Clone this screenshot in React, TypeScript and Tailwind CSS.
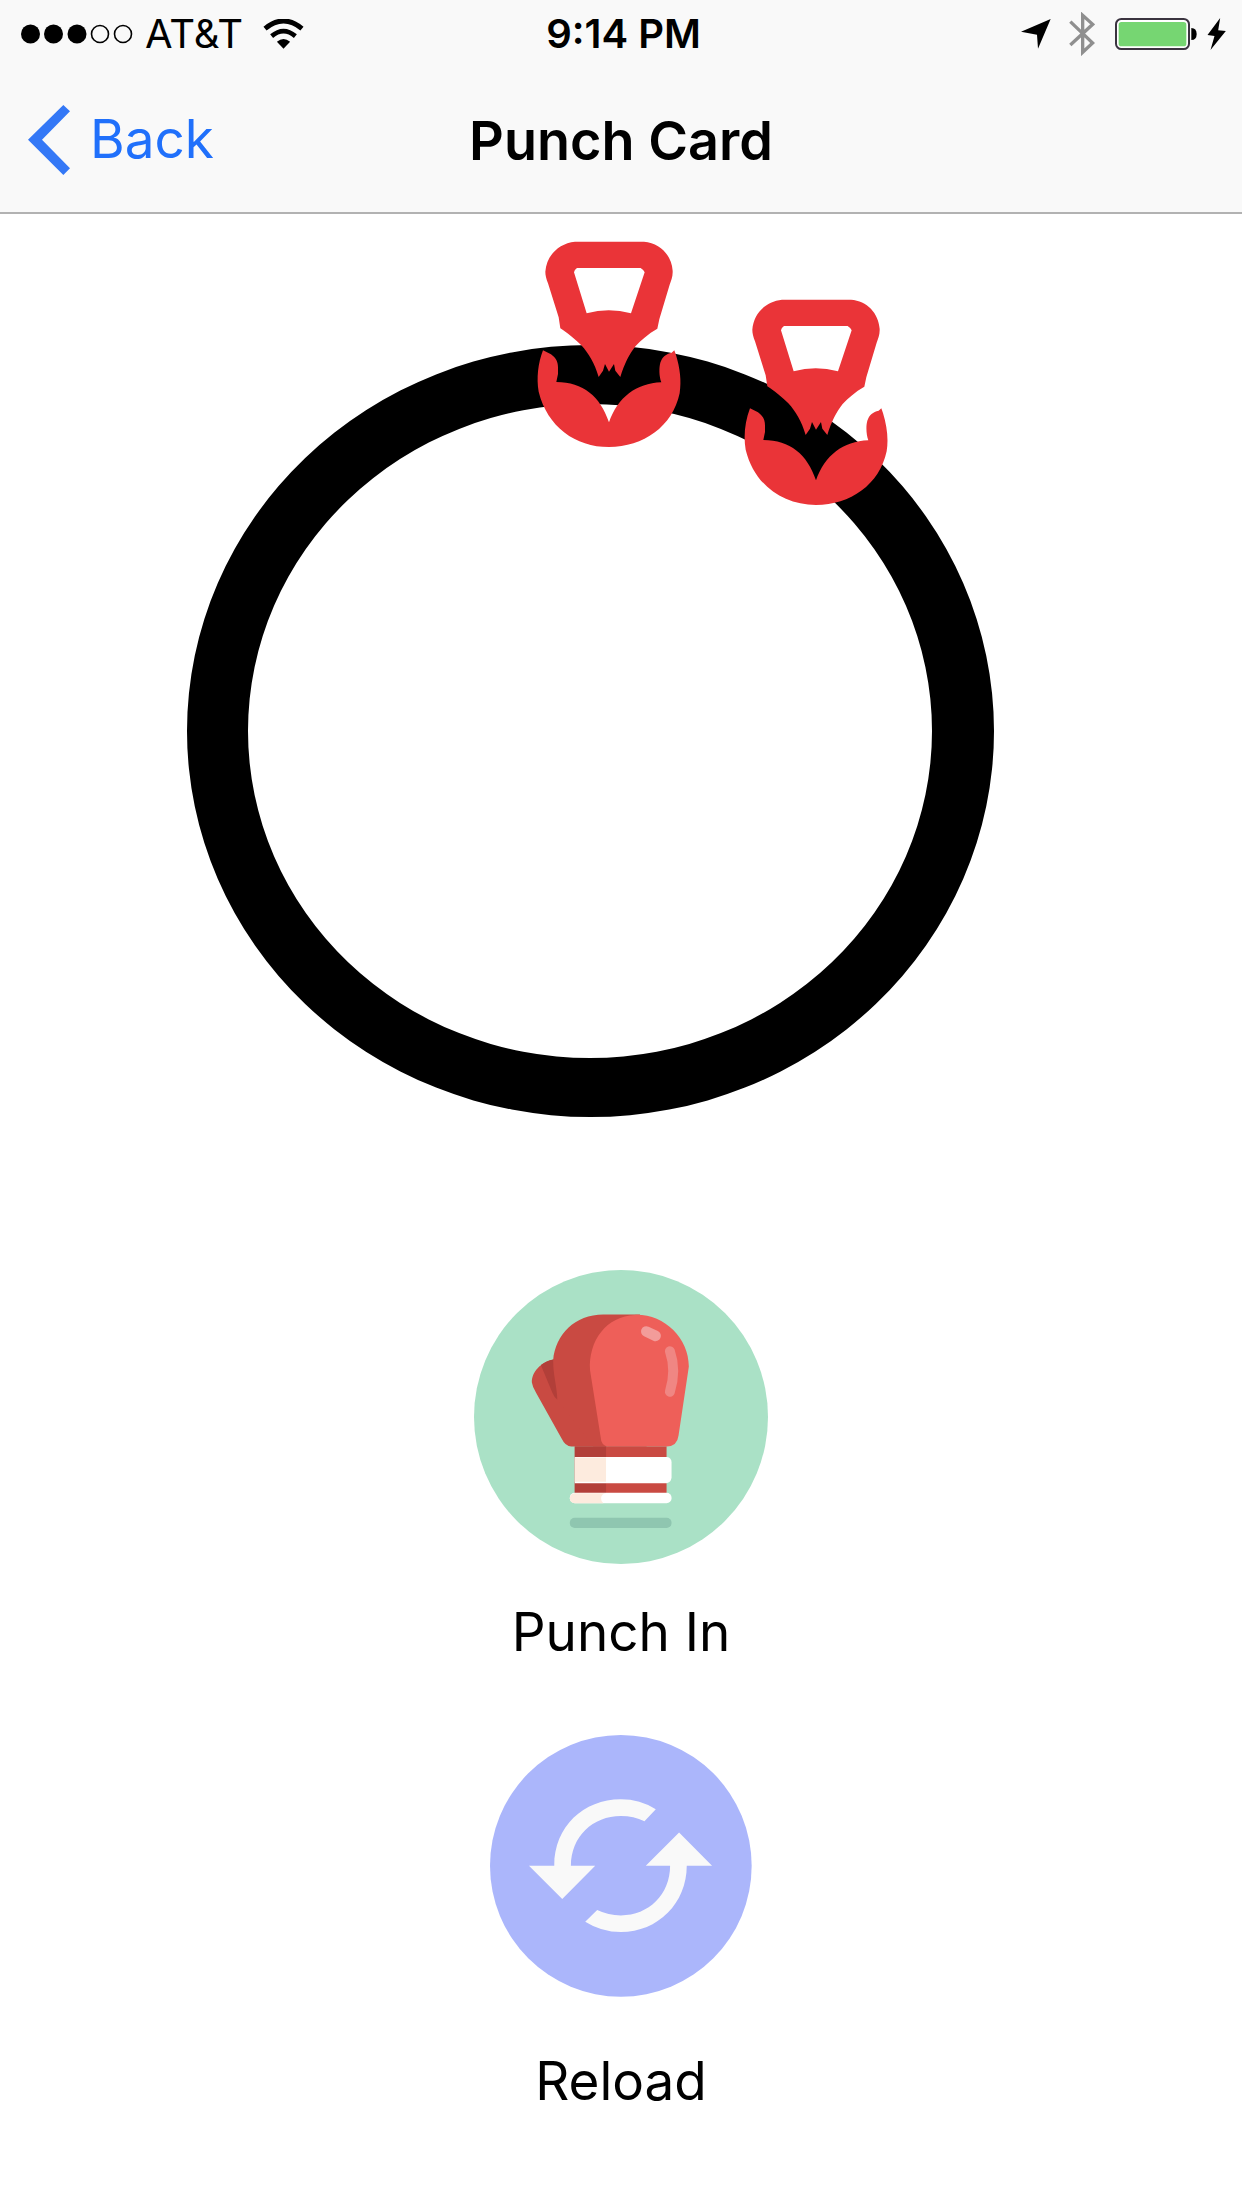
const FONT = "font-['Inter','Liberation_Sans',sans-serif]";

function SignalDots() {
  return (
    <svg className="h-5 w-[112px]" viewBox="0 0 112 20" aria-label="Signal strength 3 of 5" role="img">
      <circle cx="9.5" cy="10" r="9.5" />
      <circle cx="32.5" cy="10" r="9.5" />
      <circle cx="56" cy="10" r="9.5" />
      <circle cx="79" cy="10" r="8.5" fill="none" stroke="#000" strokeWidth="1.6" />
      <circle cx="102" cy="10" r="8.5" fill="none" stroke="#000" strokeWidth="1.6" />
    </svg>
  );
}

function WifiIcon() {
  return (
    <svg className="h-[30px] w-[41px]" viewBox="786 54 122 91" aria-label="Wi-Fi" role="img">
      <path d="M791 83 Q847 37 903 83" fill="none" stroke="#000" strokeWidth="15" />
      <path d="M811 106 Q847 76 883 106" fill="none" stroke="#000" strokeWidth="14" />
      <path d="M827 123 Q847 106 867 123 L847 144 Z" />
    </svg>
  );
}

function LocationIcon() {
  return (
    <svg className="h-[30px] w-[30px]" viewBox="121 59 90 90" aria-label="Location" role="img">
      <path d="M210 59 L172 148 L169 106 L121 97 Z" />
    </svg>
  );
}

function BluetoothIcon() {
  return (
    <svg className="h-11 w-[26px]" viewBox="268 36 78 132" aria-label="Bluetooth" role="img">
      <path
        d="M272 65 L339 129 L309 157 V46 L339 73 L272 135"
        fill="none"
        stroke="#8f8f8f"
        strokeWidth="10"
      />
    </svg>
  );
}

function BatteryIcon() {
  return (
    <svg className="h-8 w-[82px]" viewBox="408 53 246 96" aria-label="Battery full" role="img">
      <rect x="411" y="56" width="219" height="90" rx="16" fill="#fff" stroke="#3b3440" strokeWidth="6" />
      <rect x="419" y="65" width="203" height="73" rx="8" fill="#76d672" />
      <path d="M637 83 Q653 83 653 101 Q653 119 637 119 Z" />
    </svg>
  );
}

function BoltIcon() {
  return (
    <svg className="h-8 w-[19px]" viewBox="681 51 56 96" aria-label="Charging" role="img">
      <path d="M720 51 L682 102 L703 105 L691 147 L737 90 L714 88 Z" />
    </svg>
  );
}

function Punch() {
  return (
    <g fill="#ea3438">
      <path
        fillRule="evenodd"
        d="M165 35 H372 C420 38 455 76 458 122 C459 140 453 152 449 164 L418 268 L412 296 C384 312 364 330 347 348 C327 374 314 400 301 441 L286 422 L282 402 L267 425 L255 402 L249 422 L236 441 C224 400 206 370 184 346 C166 328 142 308 121 295 L116 262 L84 160 C79 146 76 136 76 125 C80 76 116 40 165 35 Z M171 114 Q163 119 162 127 L200 250 Q266 232 333 250 L374 127 Q371 119 362 114 Z"
      />
      <path d="M69 361 L93 373 C108 384 114 396 114 412 V432 L109 456 C190 457 240 498 267 577 C294 502 348 460 424 457 C417 438 417 412 421 398 C427 380 438 372 455 368 L463 361 L468 375 C480 415 485 452 479 490 C458 590 370 651 267 651 C166 651 82 590 56 485 C49 445 54 400 69 361 Z" />
    </g>
  );
}

const punches = [
  { id: 1, x: 520, y: 16 },
  { id: 2, x: 727, y: 74 },
];

function PunchRing() {
  return (
    <svg className="block w-full" viewBox="0 0 1242 1056" role="img" aria-label="2 punches on the card">
      <path
        fillRule="evenodd"
        d="M187 517 A403.500 386 0 0 1 994 517 A403.500 386 0 0 1 187 517 Z M248 517 A342 327 0 0 0 932 517 A342 327 0 0 0 248 517 Z"
      />
      {punches.map((p) => (
        <g key={p.id} transform={`translate(${p.x} ${p.y}) scale(0.3333)`}>
          <Punch />
        </g>
      ))}
    </svg>
  );
}

function GloveIcon() {
  return (
    <svg className="size-[294px]" viewBox="41 28 884 884" aria-hidden="true">
      <circle cx="483" cy="470" r="442" fill="#aae1c6" />
      <path d="M284 296 C240 304 214 336 215 366 Q217 380 228 398 L304 534 Q316 559 334 559 H440 L420 300 Z" fill="#c94a42" />
      <path d="M280 297 Q258 301 242 314 L277 398 Q282 411 292 418 L300 300 Z" fill="#b23f39" />
      <path d="M292 418 C289 370 279 345 279 300 C286 222 344 162 430 162 H540 L560 559 H400 Z" fill="#c94a42" />
      <path d="M525 163 C612 160 687 232 687 318 L656 526 Q652 559 620 559 H445 Q423 557 422 532 L390 330 C384 240 440 166 525 163 Z" fill="#ee5f59" />
      <path d="M559 213 L587 226" stroke="#f29c9a" strokeWidth="32" strokeLinecap="round" />
      <path d="M630 272 Q650 330 630 394" fill="none" stroke="#f08683" strokeWidth="30" strokeLinecap="round" />
      <path d="M344 559 H620 V700 H344 Z" fill="#c94a42" />
      <path d="M344 559 H438 V700 H344 Z" fill="#b23f39" />
      <path d="M344 590 H621 Q635 592 635 606 V653 Q633 667 620 669 H344 Z" fill="#fff" />
      <path d="M344 592 H438 V665 H344 Z" fill="#fdebde" />
      <rect x="329" y="698" width="306" height="31" rx="15" fill="#fff" />
      <path d="M344 699 H438 Q424 700 423 714 Q423 725 430 729 H344 Q329 727 329 714 Q330 700 344 699 Z" fill="#fdebde" />
      <rect x="329" y="773" width="306" height="31" rx="15" fill="#8fc6b0" />
    </svg>
  );
}

function ReloadIcon() {
  return (
    <svg className="size-[262px]" viewBox="31 43 787 787" aria-hidden="true">
      <circle cx="424" cy="436" r="393" fill="#abb6fb" />
      <g fill="#f9f9f9">
        <path d="M148 436 H224 C224 318 312 236 424 236 Q482 236 529 266 L495 302 Q463 286 424 286 C340 286 274 348 274 436 H347 L248 536 Z" />
        <path d="M698 436 H622 C622 548 536 635 424 635 Q366 635 317 604 L353 569 Q386 585 424 585 C508 585 572 522 572 436 H499 L599 336 Z" />
      </g>
    </svg>
  );
}

export default function App() {
  return (
    <div className={`min-h-screen bg-white text-black ${FONT}`}>
      <header className="border-b-2 border-[#b2b2b2] bg-[#f9f9f9]">
        <div className="grid h-[68px] grid-cols-[1fr_auto_1fr] items-center pl-[21px] pr-4 text-[40px]">
          <div className="flex items-center">
            <SignalDots />
            <span className="ml-3 mr-5">AT&amp;T</span>
            <WifiIcon />
          </div>
          <time className="font-semibold">9:14 PM</time>
          <div className="flex items-center justify-end">
            <LocationIcon />
            <span className="ml-[18px] flex">
              <BluetoothIcon />
            </span>
            <span className="ml-5 mr-[10px] flex">
              <BatteryIcon />
            </span>
            <BoltIcon />
          </div>
        </div>
        <nav className="grid h-36 grid-cols-[1fr_auto_1fr] items-center px-7 text-[54px]">
          <button type="button" className="flex items-center gap-5 justify-self-start text-[53px] text-[#2070fb]">
            <svg className="h-[70px] w-[42px]" viewBox="83 312 126 210" aria-hidden="true">
              <path d="M189 312 L209 331 L125 416 L209 502 L189 522 L83 416 Z" fill="#3478f6" />
            </svg>
            <span>Back</span>
          </button>
          <h1 className="font-semibold">Punch Card</h1>
        </nav>
      </header>
      <main className="flex flex-col items-center text-[53px] leading-[64px]">
        <PunchRing />
        <button type="button" className="flex flex-col items-center gap-9">
          <GloveIcon />
          <span>Punch In</span>
        </button>
        <button type="button" className="mt-[71px] flex flex-col items-center gap-[52px]">
          <ReloadIcon />
          <span>Reload</span>
        </button>
      </main>
    </div>
  );
}
